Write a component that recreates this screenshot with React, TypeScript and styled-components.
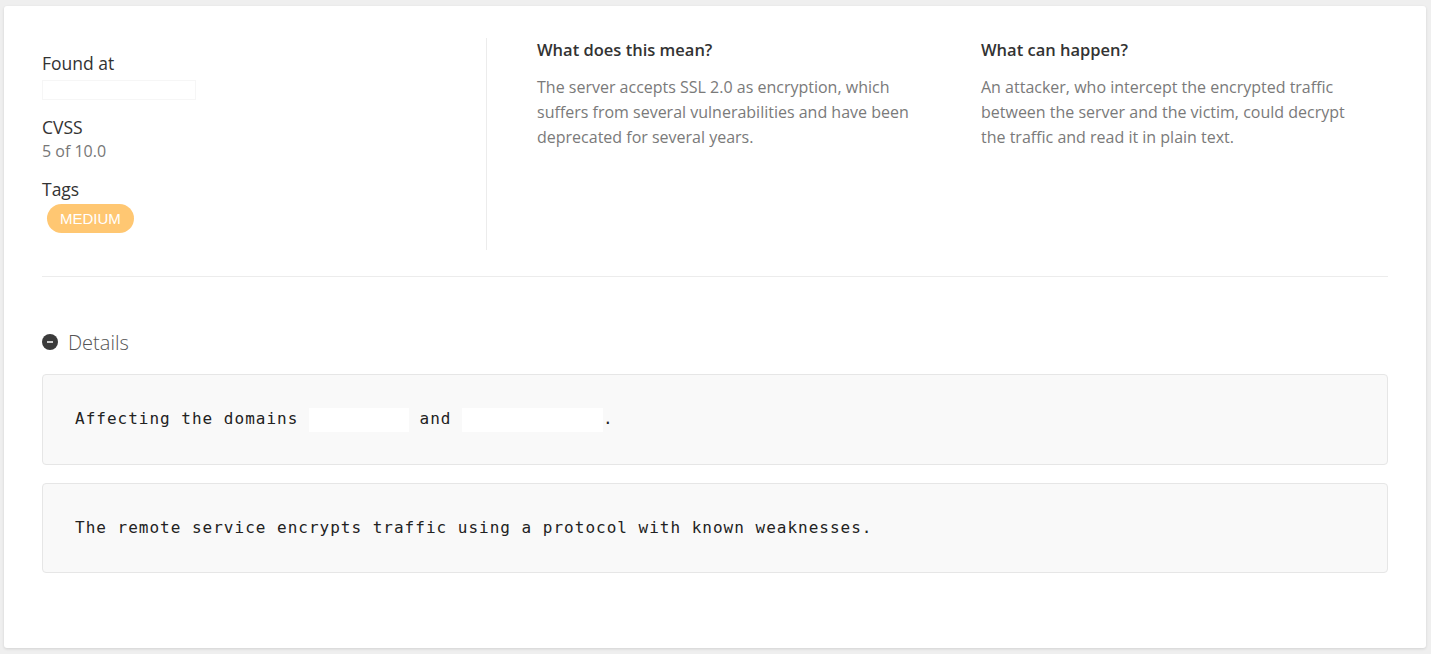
import * as React from "react";
import styled, { createGlobalStyle } from "styled-components";

const GlobalStyle = createGlobalStyle`
  html, body {
    margin: 0;
    padding: 0;
    background: #efefef;
    font-family: "Open Sans", "Liberation Sans", sans-serif;
    color: #333;
  }
`;

const Card = styled.div`
  margin: 6px 5px 6px 4px;
  padding: 32px 38px 75px;
  background: #fff;
  border-radius: 3px;
  box-shadow: 0 1px 3px rgba(0, 0, 0, 0.12);
`;

const TopRow = styled.div`
  display: grid;
  grid-template-columns: 445px 444px 1fr;
  min-height: 212px;
`;

const MetaColumn = styled.div`
  padding-top: 13px;
  border-right: 1px solid #ececec;
`;

const TextColumn = styled.div`
  padding-left: 50px;
`;

const Label = styled.div<{ $gap?: number }>`
  font-size: 17.5px;
  line-height: 24px;
  color: #333;
  margin-top: ${(p) => p.$gap ?? 0}px;
`;

const Value = styled.div`
  font-size: 16px;
  line-height: 24px;
  color: #777;
`;

const EmptyValue = styled.div`
  margin-top: 5px;
  width: 152px;
  height: 18px;
  border: 1px solid #f6f6f6;
`;

const Badge = styled.span`
  display: inline-block;
  margin: 3px 0 0 5px;
  padding: 0 13px;
  height: 29px;
  line-height: 29px;
  border-radius: 15px;
  background: #ffc772;
  color: #fff;
  font-family: "Liberation Sans", Arial, sans-serif;
  font-size: 15px;
  text-transform: uppercase;
`;

const Heading = styled.h4`
  margin: 0 0 13px;
  font-size: 16.5px;
  font-weight: 600;
  line-height: 24px;
  color: #333;
`;

const Body = styled.p`
  margin: 0;
  font-size: 16px;
  line-height: 25px;
  color: #7a7a7a;
  max-width: 380px;
`;

const Divider = styled.hr`
  margin: 26px 0 0;
  border: 0;
  border-top: 1px solid #ececec;
`;

const DetailsHeader = styled.div`
  display: flex;
  align-items: center;
  gap: 10px;
  margin-top: 53px;
  height: 24px;
  font-size: 20px;
  font-weight: 300;
  color: #555;
`;

const CodeBlock = styled.pre`
  margin: 20px 0 0;
  padding: 32px 32px;
  background: #f9f9f9;
  border: 1px solid #e6e6e6;
  border-radius: 4px;
  font-family: "DejaVu Sans Mono", "Liberation Mono", monospace;
  font-size: 16px;
  letter-spacing: 1px;
  line-height: 24px;
  color: #222;
  white-space: pre-wrap;

  & + & {
    margin-top: 18px;
  }
`;

const Redacted = styled.span<{ $w: number }>`
  display: inline-block;
  width: ${(p) => p.$w}px;
  height: 24px;
  vertical-align: middle;
  background: #fff;
`;

const MinusCircle = () => (
  <svg width="16" height="16" viewBox="0 0 16 16">
    <circle cx="8" cy="8" r="8" fill="#3b3b3b" />
    <rect x="5" y="7.25" width="6" height="1.5" fill="#fff" />
  </svg>
);

export default function App() {
  return (
    <>
      <GlobalStyle />
      <Card>
        <TopRow>
          <MetaColumn>
            <Label>Found at</Label>
            <EmptyValue />
            <Label $gap={15}>CVSS</Label>
            <Value>5 of 10.0</Value>
            <Label $gap={14}>Tags</Label>
            <Badge>Medium</Badge>
          </MetaColumn>
          <TextColumn>
            <Heading>What does this mean?</Heading>
            <Body>
              The server accepts SSL 2.0 as encryption, which suffers from several
              vulnerabilities and have been deprecated for several years.
            </Body>
          </TextColumn>
          <TextColumn>
            <Heading>What can happen?</Heading>
            <Body>
              An attacker, who intercept the encrypted traffic between the server and
              the victim, could decrypt the traffic and read it in plain text.
            </Body>
          </TextColumn>
        </TopRow>
        <Divider />
        <DetailsHeader>
          <MinusCircle />
          Details
        </DetailsHeader>
        <CodeBlock>
          Affecting the domains <Redacted $w={100} /> and <Redacted $w={141} />.
        </CodeBlock>
        <CodeBlock>
          The remote service encrypts traffic using a protocol with known weaknesses.
        </CodeBlock>
      </Card>
    </>
  );
}
